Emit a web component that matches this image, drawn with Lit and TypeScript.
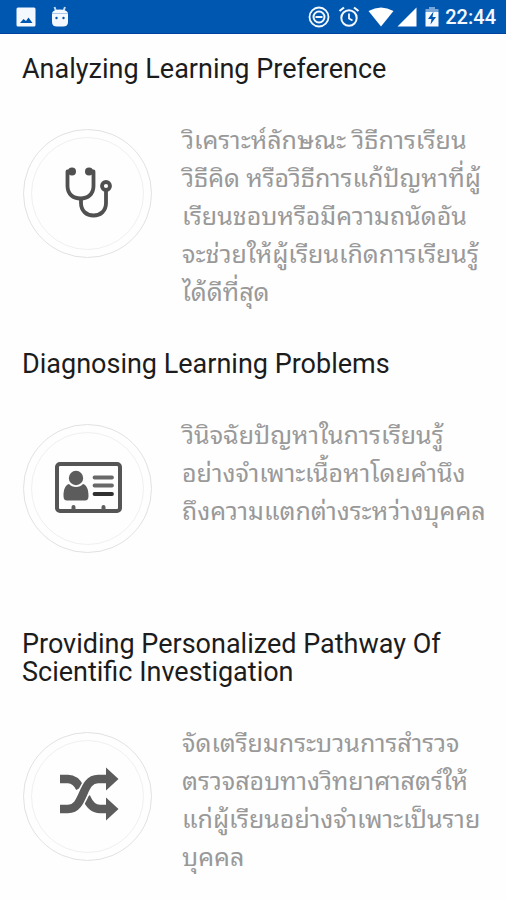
import { LitElement, html, svg, css } from "lit";
import { customElement, property } from "lit/decorators.js";

type IconName = "stethoscope" | "card" | "shuffle";

interface Feature {
  icon: IconName;
  title: string;
  lines: string[];
}

const FEATURES: Feature[] = [
  {
    icon: "stethoscope",
    title: "Analyzing Learning Preference",
    lines: [
      "วิเคราะห์ลักษณะ วิธีการเรียน",
      "วิธีคิด หรือวิธีการแก้ปัญหาที่ผู้",
      "เรียนชอบหรือมีความถนัดอัน",
      "จะช่วยให้ผู้เรียนเกิดการเรียนรู้",
      "ได้ดีที่สุด",
    ],
  },
  {
    icon: "card",
    title: "Diagnosing Learning Problems",
    lines: [
      "วินิจฉัยปัญหาในการเรียนรู้",
      "อย่างจำเพาะเนื้อหาโดยคำนึง",
      "ถึงความแตกต่างระหว่างบุคคล",
    ],
  },
  {
    icon: "shuffle",
    title: "Providing Personalized Pathway Of Scientific Investigation",
    lines: [
      "จัดเตรียมกระบวนการสำรวจ",
      "ตรวจสอบทางวิทยาศาสตร์ให้",
      "แก่ผู้เรียนอย่างจำเพาะเป็นราย",
      "บุคคล",
    ],
  },
];

const ICONS = {
  stethoscope: svg`
    <g fill="none" stroke="#505050" stroke-width="3.8">
      <path d="M27 18.5 H22.500 V33 C22.500 41 28 45.500 35.500 45.500 C43 45.500 48.500 41 48.500 33 V18.500 H44" stroke-linejoin="round"/>
      <path d="M36 46 V50 C36 58 41.500 62.500 48.500 62.500 C55.500 62.500 61 58 61 50 V38"/>
      <circle cx="61" cy="33" r="4" stroke-width="3.8"/>
    </g>
    <g fill="#505050"><circle cx="27" cy="18.500" r="4"/><circle cx="44" cy="18.500" r="4"/></g>`,
  card: svg`
    <rect x="12" y="16" width="63" height="47" rx="3" fill="none" stroke="#555" stroke-width="4"/>
    <g fill="#5c5c5c">
      <circle cx="31" cy="30" r="7.2"/>
      <path d="M24 36 C27 40 35 40 38 36 C42 37 43.500 42 43.500 48 Q43.500 52.500 40 52.500 H22 Q18.500 52.500 18.500 48 C18.500 42 20 37 24 36 Z"/>
      <path d="M26.500 62 V59 Q26.500 57 28.500 57 Q30.500 57 30.500 59 V62 Z M56.500 62 V59 Q56.500 57 58.500 57 Q60.500 57 60.500 59 V62 Z"/>
    </g>
    <g stroke-width="3.8" stroke-linecap="round">
      <path stroke="#686868" d="M49.500 29.500 H67 M49.500 37.500 H67"/>
      <path stroke="#303030" d="M49.500 46 H67"/>
    </g>`,
  shuffle: svg`
    <g fill="none" stroke="#5c5c5c" stroke-width="8.5">
      <path d="M41 41 C45 50 49 53 55 53 H62"/>
      <path d="M15 23 H23 C28 23 32 26 35 32"/>
    </g>
    <path d="M22 53 C40 53 36 23 54 23" fill="none" stroke="#fefefe" stroke-width="12"/>
    <path d="M15 53 H23 C40 53 36 23 53 23 H62" fill="none" stroke="#5c5c5c" stroke-width="8.5"/>
    <path fill="#5c5c5c" d="M61 11.500 L73.500 23 L61 34.500 Z M61 41.500 L73.500 53 L61 64.500 Z"/>`,
};

@customElement("status-bar")
export class StatusBar extends LitElement {
  static styles = css`
    :host {
      display: flex;
      align-items: center;
      justify-content: space-between;
      box-sizing: border-box;
      height: 34px;
      padding: 0 10px 0 16px;
      background: #0057b0;
      border-bottom: 1px solid #0042a0;
      color: #f4f8ff;
      font: 500 20px/24px Roboto, sans-serif;
    }
    .group {
      display: flex;
      align-items: center;
    }
    .left {
      gap: 14px;
    }
    .status {
      gap: 8px;
    }
    .signals {
      gap: 3px;
    }
    svg {
      display: block;
    }
  `;

  render() {
    return html`
      <div class="group left">
        <svg width="20" height="20" viewBox="0 0 20 20" aria-hidden="true">
          <path fill="#f4f8ff" fill-rule="evenodd" d="M2 0.500 H18 Q19.500 0.500 19.500 2 V18 Q19.500 19.500 18 19.500 H2 Q0.500 19.500 0.500 18 V2 Q0.500 0.500 2 0.500 Z M4 16 H16.500 L12.500 10.500 L10 14 L7.500 12 Z"/>
        </svg>
        <svg width="20" height="22" viewBox="0 0 20 22" aria-hidden="true">
          <path d="M4.500 1 L6 5 M15 1 L13.500 5" stroke="#c5daf4" stroke-width="2"/>
          <path fill="#f4f8ff" d="M2 8 Q2 3.500 9.500 3.500 Q18 3.500 18 8 V16 Q18 20.500 13 20.500 H7 Q2 20.500 2 16 Z"/>
          <path d="M2 7.500 H18" stroke="#a9c8ec" stroke-width="1"/>
          <g fill="#0057b0"><circle cx="6.500" cy="12" r="1.200"/><circle cx="13.500" cy="12" r="1.200"/></g>
        </svg>
      </div>
      <div class="group status">
        <svg width="22" height="22" viewBox="0 0 22 22" fill="none" stroke="#f4f8ff" aria-hidden="true">
          <circle cx="11" cy="11" r="9.500" stroke-width="1.800"/>
          <circle cx="11" cy="11" r="5.500" stroke-width="2"/>
          <path d="M7.500 11 H14.500" stroke-width="2"/>
        </svg>
        <svg width="22" height="22" viewBox="0 0 22 22" fill="none" stroke="#f4f8ff" aria-hidden="true">
          <circle cx="11" cy="12" r="7.700" stroke-width="2"/>
          <path d="M11 7.500 V12.500 L14.500 14.500" stroke-width="1.800"/>
          <path d="M1.500 5 L6 1.500 M20.500 5 L16 1.500" stroke-width="2.200"/>
        </svg>
        <div class="group signals">
          <svg width="26" height="20" viewBox="0 0 26 20" aria-hidden="true">
            <path fill="#fff" d="M0.500 4 Q13 -3 25.500 4 L13 19.500 Z"/>
          </svg>
          <svg width="20" height="20" viewBox="0 0 20 20" aria-hidden="true">
            <path fill="#fff" d="M19.500 0.500 V19.500 H0.500 Z"/>
          </svg>
          <svg width="22" height="20" viewBox="2 0 22 20" aria-hidden="true">
            <path fill="#79a6d8" d="M11 0 H17 V2 H20.500 V5 H7.500 V2 H11 Z"/>
            <path fill="#f4f8ff" d="M7.500 5 H20.500 V19.500 H7.500 Z"/>
            <path fill="#0057b0" d="M15.500 4.500 L10 12 H13.500 L12.500 17.500 L18 10 H14.500 Z"/>
          </svg>
          <span>22:44</span>
        </div>
      </div>
    `;
  }
}

@customElement("feature-section")
export class FeatureSection extends LitElement {
  @property({ attribute: false }) feature!: Feature;

  static styles = css`
    :host {
      display: block;
    }
    h2 {
      margin: 0 0 39px;
      color: #1c1c1c;
      font: 400 27px/28px Roboto, sans-serif;
    }
    .body {
      display: grid;
      grid-template-columns: 130px 1fr;
      column-gap: 30px;
      align-items: start;
    }
    .badge {
      display: grid;
      place-items: center;
      box-sizing: border-box;
      height: 129px;
      margin: 7px 0 39px 1px;
      border: 1px solid #e2e2e2;
      border-radius: 50%;
    }
    .ring {
      display: grid;
      place-items: center;
      box-sizing: border-box;
      width: 113px;
      height: 113px;
      border: 1px solid #f0f0f0;
      border-radius: 50%;
    }
    p {
      margin: 0;
      color: #999;
      font: 400 25px/38px Roboto, "Noto Sans Thai Looped", "Noto Looped Thai", Loma, Garuda, Waree, "Noto Sans Thai", sans-serif;
      white-space: nowrap;
    }
  `;

  render() {
    const { icon, title, lines } = this.feature;
    return html`
      <h2>${title}</h2>
      <div class="body">
        <div class="badge">
          <div class="ring">
            <svg width="85" height="81" viewBox="0 0 85 81" aria-hidden="true">${ICONS[icon]}</svg>
          </div>
        </div>
        <p lang="th">${lines.map((line, i) => html`${i ? html`<br />` : ""}${line}`)}</p>
      </div>
    `;
  }
}

@customElement("app-root")
export class AppRoot extends LitElement {
  static styles = css`
    :host {
      display: block;
      min-height: 100vh;
      background: #fefefe;
    }
    main {
      display: flex;
      flex-direction: column;
      gap: 38px;
      padding: 21px 22px 0;
    }
  `;

  render() {
    return html`
      <status-bar></status-bar>
      <main>${FEATURES.map((f) => html`<feature-section .feature=${f}></feature-section>`)}</main>
    `;
  }
}
